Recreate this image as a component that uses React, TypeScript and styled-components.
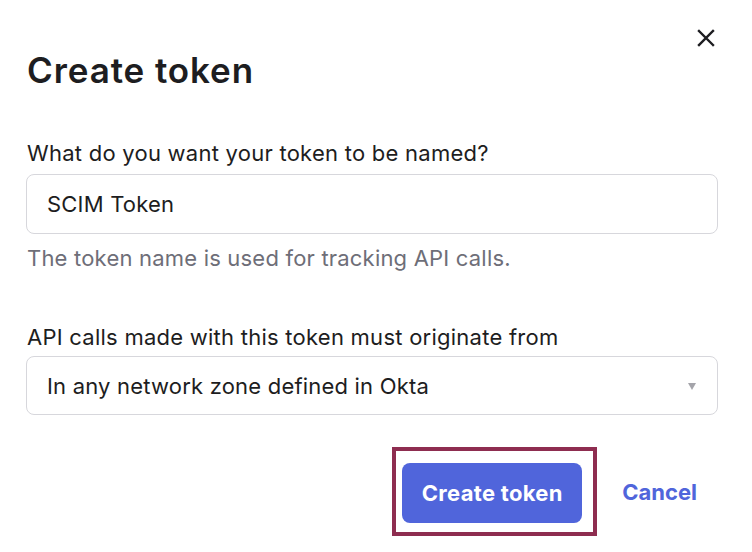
import React from 'react';
import styled, { createGlobalStyle } from 'styled-components';

const GlobalStyle = createGlobalStyle`
  html, body {
    margin: 0;
    padding: 0;
    background: #ffffff;
  }
  body {
    font-family: Inter, 'Noto Sans', 'Liberation Sans', sans-serif;
    color: #1d1d21;
  }
`;

const Dialog = styled.div`
  width: 752px;
  height: 552px;
  box-sizing: border-box;
  padding: 29px 34px 0 26px;
  display: flex;
  flex-direction: column;
`;

const Header = styled.header`
  display: flex;
  justify-content: space-between;
  align-items: flex-start;
`;

const Title = styled.h1`
  margin: 21px 0 0 1px;
  font-size: 35px;
  line-height: 40px;
  font-weight: 600;
  letter-spacing: 0.9px;
  color: #1d1d21;
`;

const CloseButton = styled.button`
  border: none;
  background: none;
  padding: 0;
  margin-right: 3px;
  width: 18px;
  height: 18px;
  display: flex;
  cursor: pointer;
`;

const Field = styled.div<{ $top: number }>`
  display: flex;
  flex-direction: column;
  margin-top: ${(p) => p.$top}px;
`;

const Label = styled.label<{ $gap: number }>`
  font-size: 22px;
  line-height: 24px;
  letter-spacing: 0.25px;
  margin: 0 0 ${(p) => p.$gap}px 1px;
  color: #1d1d21;
`;

const Box = styled.div<{ $height: number }>`
  box-sizing: border-box;
  height: ${(p) => p.$height}px;
  border: 1px solid #d7d7dc;
  border-radius: 8px;
  padding: 0 21px 0 20px;
  display: flex;
  align-items: center;
  justify-content: space-between;
  font-size: 22px;
  letter-spacing: 0.2px;
  color: #1d1d21;
`;

const Caret = styled.span`
  width: 0;
  height: 0;
  border-left: 4px solid transparent;
  border-right: 4px solid transparent;
  border-top: 7px solid #a4a4aa;
  margin-top: 2px;
`;

const Hint = styled.p`
  margin: 12px 0 0 1px;
  font-size: 22px;
  line-height: 24px;
  letter-spacing: 0.2px;
  color: #6e6e78;
`;

const Actions = styled.div`
  margin-top: 32px;
  display: flex;
  justify-content: flex-end;
  align-items: center;
  gap: 4px;
`;

const Highlight = styled.div`
  border: 4px solid #8e2d50;
  padding: 12px 11px 9px 6px;
`;

const PrimaryButton = styled.button`
  width: 180px;
  height: 60px;
  border: none;
  border-radius: 8px;
  background: #5065db;
  color: #ffffff;
  font-family: inherit;
  font-size: 22px;
  font-weight: 700;
  letter-spacing: 0.3px;
  cursor: pointer;
`;

const TextButton = styled.button`
  border: none;
  background: none;
  padding: 0 21px;
  color: #5065db;
  font-family: inherit;
  font-size: 22px;
  font-weight: 700;
  cursor: pointer;
`;

const App = () => {
  return (
    <>
      <GlobalStyle />
      <Dialog>
        <Header>
          <Title>Create token</Title>
          <CloseButton aria-label="Close">
            <svg width="18" height="18" viewBox="0 0 18 18">
              <path
                d="M2 2 L16 16 M16 2 L2 16"
                stroke="#1d1d21"
                strokeWidth="2.4"
                strokeLinecap="square"
                fill="none"
              />
            </svg>
          </CloseButton>
        </Header>

        <Field $top={51}>
          <Label $gap={9}>What do you want your token to be named?</Label>
          <Box $height={60}>SCIM Token</Box>
          <Hint>The token name is used for tracking API calls.</Hint>
        </Field>

        <Field $top={55}>
          <Label $gap={7}>API calls made with this token must originate from</Label>
          <Box $height={59}>
            In any network zone defined in Okta
            <Caret />
          </Box>
        </Field>

        <Actions>
          <Highlight>
            <PrimaryButton>Create token</PrimaryButton>
          </Highlight>
          <TextButton>Cancel</TextButton>
        </Actions>
      </Dialog>
    </>
  );
};

export default App;
